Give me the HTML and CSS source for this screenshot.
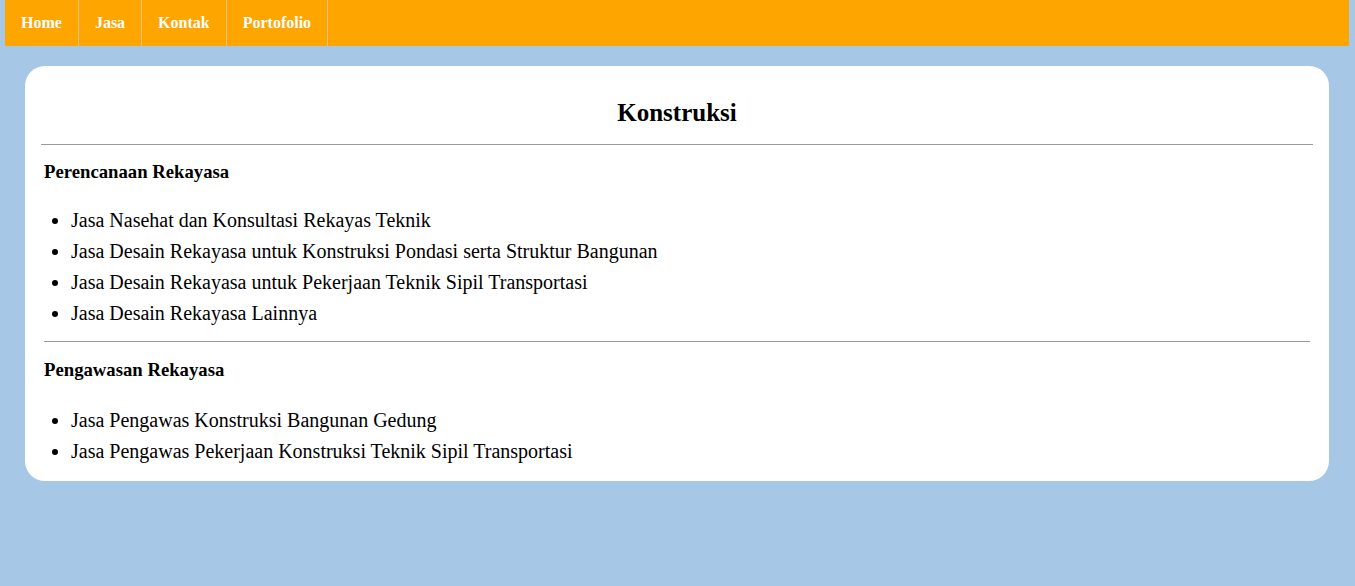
FILE: index.html
```html
<!DOCTYPE html>
<html lang="id">
<head>
<meta charset="utf-8">
<title>Konstruksi</title>
<link rel="stylesheet" href="styles.css">
</head>
<body>
<nav class="nav">
  <a class="nav-item" href="#">Home</a>
  <a class="nav-item" href="#">Jasa</a>
  <a class="nav-item" href="#">Kontak</a>
  <a class="nav-item" href="#">Portofolio</a>
</nav>
<main class="card">
  <h1 class="title">Konstruksi</h1>
  <hr class="rule rule-top">
  <section class="section">
    <h3 class="sub">Perencanaan Rekayasa</h3>
    <ul class="list">
      <li>Jasa Nasehat dan Konsultasi Rekayas Teknik</li>
      <li>Jasa Desain Rekayasa untuk Konstruksi Pondasi serta Struktur Bangunan</li>
      <li>Jasa Desain Rekayasa untuk Pekerjaan Teknik Sipil Transportasi</li>
      <li>Jasa Desain Rekayasa Lainnya</li>
    </ul>
    <hr class="rule rule-mid">
    <h3 class="sub sub-second">Pengawasan Rekayasa</h3>
    <ul class="list list-second">
      <li>Jasa Pengawas Konstruksi Bangunan Gedung</li>
      <li>Jasa Pengawas Pekerjaan Konstruksi Teknik Sipil Transportasi</li>
    </ul>
  </section>
</main>
</body>
</html>
```
FILE: styles.css
```css
html, body {
  margin: 0;
  padding: 0;
}
body {
  background: #a7c7e7;
  font-family: "Liberation Serif", "Times New Roman", serif;
  color: #000;
  padding: 0 6px 0 5px;
}
.nav {
  display: flex;
  background: #ffa500;
  height: 46px;
}
.nav-item {
  display: flex;
  align-items: center;
  padding: 0 16px;
  color: #fff;
  font-weight: bold;
  font-size: 16px;
  text-decoration: none;
  border-right: 1px solid #e8c48a;
}
.card {
  margin: 20px 20px 0 20px;
  background: #fff;
  border-radius: 20px;
  padding: 31px 16px 14px 16px;
}
.title {
  margin: 0;
  text-align: center;
  font-size: 25px;
  line-height: 32px;
}
.rule {
  border: 0;
  border-top: 1px solid #9a9a9a;
  margin: 0;
}
.rule-top {
  margin-top: 15px;
}
.section {
  padding: 0 3px;
}
.sub {
  margin: 16px 0 0 0;
  font-size: 18.72px;
  line-height: 22px;
}
.sub-second {
  margin-top: 17px;
}
.list {
  margin: 22px 0 0 0;
  padding: 0 0 0 27px;
  font-size: 20px;
  line-height: 31px;
}
.list-second {
  margin-top: 24px;
}
.rule-mid {
  margin-top: 12px;
}
```
